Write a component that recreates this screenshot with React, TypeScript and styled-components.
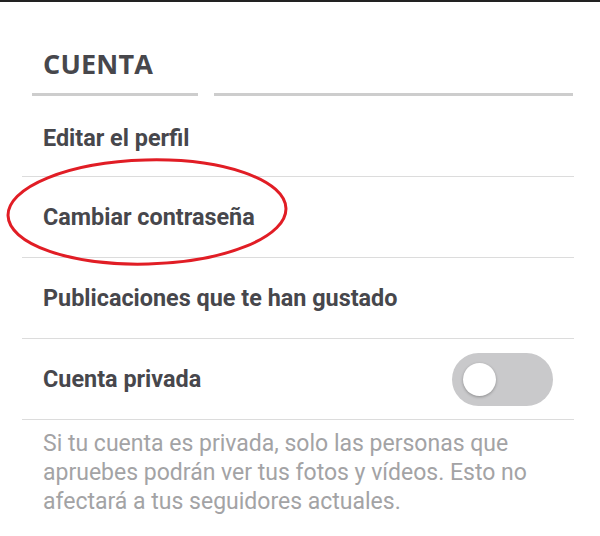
import styled, { createGlobalStyle } from "styled-components";

const GlobalStyle = createGlobalStyle`
  html, body {
    margin: 0;
    padding: 0;
    background: #ffffff;
  }
  body {
    font-family: Roboto, "Liberation Sans", sans-serif;
  }
`;

const rows = [
  { label: "Editar el perfil", offset: 3 },
  { label: "Cambiar contraseña" },
  { label: "Publicaciones que te han gustado" },
  { label: "Cuenta privada", toggle: true },
];

function App() {
  return (
    <>
      <GlobalStyle />
      <Screen>
        <TopBar />
        <SectionTitle>CUENTA</SectionTitle>
        <Underline>
          <UnderlineSegment width={166} />
          <UnderlineSegment />
        </Underline>
        <List>
          {rows.map((row, idx) => (
            <Row key={idx} offset={row.offset}>
              <RowLabel>{row.label}</RowLabel>
              {row.toggle && (
                <Switch>
                  <Knob />
                </Switch>
              )}
            </Row>
          ))}
        </List>
        <Note>
          Si tu cuenta es privada, solo las personas que apruebes podrán ver
          tus fotos y vídeos. Esto no afectará a tus seguidores actuales.
        </Note>
        <Annotation viewBox="0 0 600 536">
          <ellipse
            cx="147"
            cy="212"
            rx="139"
            ry="52"
            transform="rotate(-1.5 147 212)"
            fill="none"
            stroke="#e11d25"
            strokeWidth="3"
          />
        </Annotation>
      </Screen>
    </>
  );
}
export default App;

const Screen = styled.div`
  position: relative;
  width: 600px;
  height: 536px;
  background: #ffffff;
  overflow: hidden;
`;

const TopBar = styled.div`
  height: 2px;
  background: #222222;
`;

const SectionTitle = styled.h2`
  margin: 47px 0 0 0;
  padding-left: 43px;
  font-family: "Open Sans", "Liberation Sans", sans-serif;
  font-weight: 700;
  font-size: 27px;
  line-height: 30px;
  letter-spacing: 0.2px;
  color: #47474c;
`;

const Underline = styled.div`
  display: flex;
  gap: 16px;
  margin-top: 14px;
  padding: 0 27px 0 32px;
`;

const UnderlineSegment = styled.div<{ width?: number }>`
  height: 3px;
  background: #cdcdcd;
  flex: ${(p) => (p.width ? `0 0 ${p.width}px` : "1")};
`;

const List = styled.div`
  margin: 0 26px 0 22px;
`;

const Row = styled.div<{ offset?: number }>`
  box-sizing: border-box;
  height: 81px;
  display: flex;
  align-items: center;
  justify-content: space-between;
  padding: ${(p) => p.offset || 0}px 21px 0 21px;
  border-bottom: 1px solid #dcdcdc;
`;

const RowLabel = styled.span`
  font-weight: 700;
  font-size: 23.4px;
  color: #47474c;
`;

const Switch = styled.div`
  box-sizing: border-box;
  width: 101px;
  height: 53px;
  border-radius: 27px;
  background: #c9c9cb;
  display: flex;
  align-items: center;
  padding-left: 11px;
`;

const Knob = styled.div`
  width: 33px;
  height: 33px;
  border-radius: 50%;
  background: #ffffff;
  box-shadow: 0 1px 3px rgba(0, 0, 0, 0.3);
`;

const Note = styled.p`
  margin: 9px 0 0 0;
  padding: 0 27px 0 43px;
  font-size: 23px;
  line-height: 29px;
  color: #a3a3a5;
`;

const Annotation = styled.svg`
  position: absolute;
  left: 0;
  top: 0;
  width: 600px;
  height: 536px;
  pointer-events: none;
`;
